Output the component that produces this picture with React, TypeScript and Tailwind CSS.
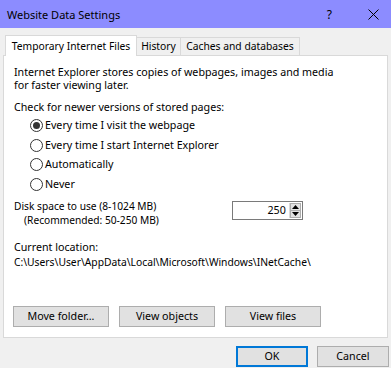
import { useState } from "react";

const font = { fontFamily: '"Noto Sans", "Liberation Sans", sans-serif' };

function Radio({ label, checked, onClick }: { label: string; checked: boolean; onClick: () => void }) {
  return (
    <div className="flex h-[19.5px] items-center cursor-default" onClick={onClick}>
      <span className="flex h-[13px] w-[13px] items-center justify-center rounded-full border border-[#333] bg-white">
        {checked && <span className="h-[7px] w-[7px] rounded-full bg-[#333]" />}
      </span>
      <span className="ml-[2px]">{label}</span>
    </div>
  );
}

function Btn({ children, primary, className = "" }: { children: React.ReactNode; primary?: boolean; className?: string }) {
  return (
    <button
      className={`flex h-[21px] items-center justify-center bg-[#e1e1e1] ${
        primary ? "border-2 border-[#0078d7]" : "border border-[#adadad]"
      } ${className}`}
    >
      {children}
    </button>
  );
}

export default function App() {
  const [mode, setMode] = useState(0);
  const [size, setSize] = useState(250);
  const options = [
    "Every time I visit the webpage",
    "Every time I start Internet Explorer",
    "Automatically",
    "Never",
  ];

  return (
    <div className="h-[368px] w-[391px] bg-[#f0f0f0] text-[10.7px] leading-[13px] text-black" style={font}>
      {/* title bar */}
      <div className="flex h-[28px] items-center bg-[#8c8cff] pl-[7px]">
        <span className="text-[11px]">Website Data Settings</span>
        <span className="ml-auto mr-[36px] text-[12px]">?</span>
        <svg width="11" height="11" viewBox="0 0 11 11" className="mr-[12px]">
          <path d="M0.5 0.5 L10.5 10.5 M10.5 0.5 L0.5 10.5" stroke="#000" strokeWidth="1" />
        </svg>
      </div>

      {/* tabs */}
      <div className="ml-[5px] mt-[7px] flex items-end text-[10.3px]">
        <div className="relative z-10 -mb-px flex h-[21px] w-[132px] items-center justify-center border border-b-0 border-[#d9d9d9] bg-white">
          Temporary Internet Files
        </div>
        <div className="flex h-[18px] w-[44px] items-center justify-center border border-l-0 border-b-0 border-[#d9d9d9] bg-[#f0f0f0]">
          History
        </div>
        <div className="flex h-[18px] w-[119px] items-center justify-center border border-l-0 border-b-0 border-[#d9d9d9] bg-[#f0f0f0]">
          Caches and databases
        </div>
      </div>

      {/* panel */}
      <div className="mx-[3px] h-[283px] border border-[#d9d9d9] bg-white pl-[10px] pt-[9.5px]">
        <p>
          Internet Explorer stores copies of webpages, images and media
          <br />
          for faster viewing later.
        </p>
        <p className="mt-[9px]">Check for newer versions of stored pages:</p>
        <div className="ml-[16px] mt-[2.5px]">
          {options.map((o, i) => (
            <Radio key={o} label={o} checked={mode === i} onClick={() => setMode(i)} />
          ))}
        </div>

        <div className="mt-[6px] flex items-start">
          <div className="text-[10.2px]">
            <div>Disk space to use (8-1024 MB)</div>
            <div className="pl-[10px] pt-px">(Recommended: 50-250 MB)</div>
          </div>
          <div className="ml-auto mr-[84px] mt-px flex h-[19px] w-[71px] border border-[#7a7a7a] bg-white">
            <input
              value={size}
              onChange={(e) => setSize(Number(e.target.value) || 0)}
              className="w-full min-w-0 pr-[3px] text-right outline-none"
            />
            <div className="my-px mr-px flex w-[15px] flex-col border-l border-[#d9d9d9]">
              <button onClick={() => setSize((s) => Math.min(1024, s + 1))} className="flex flex-1 items-center justify-center border border-[#adadad] bg-[#e1e1e1]">
                <svg width="7" height="4" viewBox="0 0 7 4"><path d="M3.5 0 L7 4 L0 4 Z" fill="#000" /></svg>
              </button>
              <button onClick={() => setSize((s) => Math.max(8, s - 1))} className="flex flex-1 items-center justify-center border border-t-0 border-[#adadad] bg-[#e1e1e1]">
                <svg width="7" height="4" viewBox="0 0 7 4"><path d="M0 0 L7 0 L3.5 4 Z" fill="#000" /></svg>
              </button>
            </div>
          </div>
        </div>

        <p className="mt-[14px]">Current location:</p>
        <p className="mt-[1.5px] text-[10.3px]">C:\Users\User\AppData\Local\Microsoft\Windows\INetCache\</p>

        <div className="-ml-px mt-[37px] flex gap-[10px]">
          <Btn className="w-[96px]">Move folder...</Btn>
          <Btn className="w-[96px]">View objects</Btn>
          <Btn className="w-[96px]">View files</Btn>
        </div>
      </div>

      {/* footer */}
      <div className="mt-[8px] flex justify-end gap-[9px] pr-[2px]">
        <Btn primary className="w-[72px]">OK</Btn>
        <Btn className="w-[72px]">Cancel</Btn>
      </div>
    </div>
  );
}
